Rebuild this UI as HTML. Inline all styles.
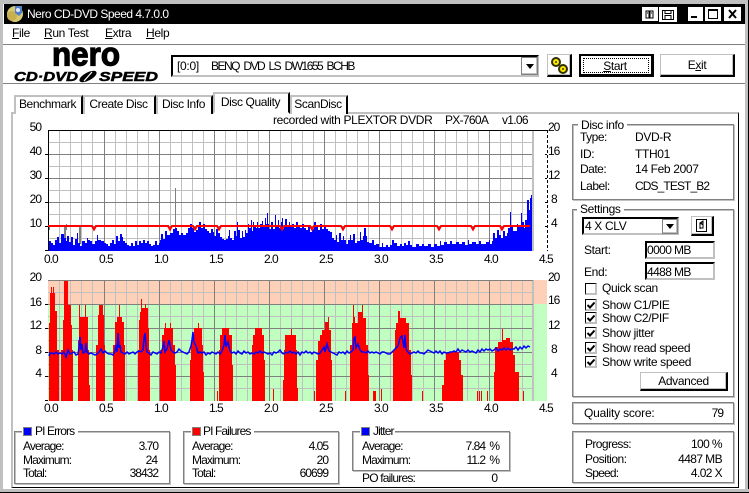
<!DOCTYPE html>
<html><head><meta charset="utf-8"><title>Nero CD-DVD Speed</title>
<style>
html,body{margin:0;padding:0}
body{width:749px;height:493px;position:relative;overflow:hidden;background:#fff;font:12px/14px "Liberation Sans",Arial,sans-serif;color:#000;letter-spacing:-.35px}
.t{position:absolute;white-space:pre;height:14px}
.r{position:absolute;white-space:pre;height:14px;text-align:right;letter-spacing:-1px}
.n{letter-spacing:-1px}
.l{letter-spacing:-.9px}
.b{position:absolute;box-sizing:border-box}
.gb{position:absolute;box-sizing:border-box;border:1px solid #808080;box-shadow:1px 1px 0 #c0c0c0,inset 1px 1px 0 #c0c0c0}
.leg{position:absolute;background:#fff;white-space:pre;height:14px;padding:0 3px}
.btn{position:absolute;box-sizing:border-box;background:#fff;border:1px solid #c0c0c0;border-right:2px solid #000;border-bottom:2px solid #000;box-shadow:inset -1px -1px 0 #c0c0c0;text-align:center}
.in{position:absolute;box-sizing:border-box;background:#fff;border:2px solid #c0c0c0;border-top:2px solid #000;border-left:2px solid #000;border-right-color:#c0c0c0}
.tab{position:absolute;box-sizing:border-box;background:#fff;border:2px solid #c0c0c0;border-bottom:0;border-right:2px solid #000;text-align:center;line-height:15px;letter-spacing:-.4px;padding-right:2px}
u{text-decoration:underline}
svg{position:absolute;left:0;top:0}
svg text{letter-spacing:0}
</style></head><body>

<!-- window frame -->
<div class="b" style="left:0;top:0;width:749px;height:4px;background:#c0c0c0"></div>
<div class="b" style="left:0;top:0;width:3px;height:493px;background:#c0c0c0"></div>
<div class="b" style="left:745px;top:0;width:3px;height:493px;background:#c0c0c0"></div>
<div class="b" style="left:748px;top:0;width:1px;height:493px;background:#000"></div>
<div class="b" style="left:0;top:489px;width:749px;height:3px;background:#c0c0c0"></div>
<div class="b" style="left:0;top:492px;width:749px;height:1px;background:#000"></div>

<!-- title bar -->
<div class="b" style="left:4px;top:4px;width:741px;height:20px;background:#000"></div>
<div class="t" style="left:27px;top:7px;color:#fff;letter-spacing:-.5px">Nero CD-DVD Speed 4.7.0.0</div>

<!-- menu -->
<div class="t" style="left:12px;top:26px"><u>F</u>ile</div>
<div class="t" style="left:44px;top:26px"><u>R</u>un Test</div>
<div class="t" style="left:105px;top:26px"><u>E</u>xtra</div>
<div class="t" style="left:146px;top:26px"><u>H</u>elp</div>
<div class="b" style="left:3px;top:44px;width:742px;height:1px;background:#808080"></div>
<div class="b" style="left:3px;top:83px;width:742px;height:1px;background:#808080"></div>

<!-- tabs -->
<div class="b" style="left:11px;top:112px;width:728px;height:376px;border:2px solid #c0c0c0;border-right:1px solid #000;border-bottom:1px solid #000"></div>
<div class="tab" style="left:14px;top:95px;width:69px;height:19px">Benchmark</div>
<div class="tab" style="left:83px;top:95px;width:73px;height:19px">Create Disc</div>
<div class="tab" style="left:156px;top:95px;width:57px;height:19px">Disc Info</div>
<div class="tab" style="left:213px;top:92px;width:77px;height:22px;line-height:16px;border-bottom:2px solid #fff">Disc Quality</div>
<div class="tab" style="left:290px;top:95px;width:58px;height:19px">ScanDisc</div>

<!-- graphics -->
<svg width="749" height="493" viewBox="0 0 749 493">
<defs>
<g id="vg">
<path shape-rendering="crispEdges" fill="none" stroke="#c0c0c0" d="M59.5 0V121M70.5 0V121M81.5 0V121M92.5 0V121M115.5 0V121M126.5 0V121M137.5 0V121M148.5 0V121M170.5 0V121M181.5 0V121M192.5 0V121M203.5 0V121M225.5 0V121M236.5 0V121M247.5 0V121M258.5 0V121M280.5 0V121M291.5 0V121M302.5 0V121M313.5 0V121M335.5 0V121M346.5 0V121M357.5 0V121M368.5 0V121M390.5 0V121M401.5 0V121M412.5 0V121M423.5 0V121M445.5 0V121M456.5 0V121M467.5 0V121M478.5 0V121M500.5 0V121M511.5 0V121M522.5 0V121M48 12.5H533M48 36.5H533M48 60.5H533M48 84.5H533M48 108.5H533"/>
<path shape-rendering="crispEdges" fill="none" stroke="#808080" d="M104.5 0V121M159.5 0V121M214.5 0V121M269.5 0V121M324.5 0V121M379.5 0V121M434.5 0V121M489.5 0V121M48 24.5H533M48 48.5H533M48 72.5H533M48 96.5H533"/>
<rect x="532" y="0" width="2" height="121" fill="#c0c0c0"/>
</g>
</defs>

<!-- top chart -->
<use href="#vg" x="0" y="130"/>
<path shape-rendering="crispEdges" fill="none" stroke="#000" d="M48.5 130V251M48 130.5H547"/>
<path shape-rendering="crispEdges" fill="none" stroke="#000" stroke-dasharray="3 2" d="M547.5 130V251"/>
<path shape-rendering="crispEdges" fill="none" stroke="#000" d="M547 154.5h-2M547 178.5h-2M547 202.5h-2M547 226.5h-2M45 154.5h3M45 178.5h3M45 202.5h3M45 226.5h3M45 250.5h3"/>
<path shape-rendering="crispEdges" fill="none" stroke="#808080" d="M175.5 188V251M64.5 226V248M65.5 226V248M79.5 226V248M80.5 226V244M49.5 226V230M66.5 224V230"/>
<path shape-rendering="crispEdges" fill="#0000ff" d="M49 251V241H51V243H53V245H55V240H57V237H59V243H61V234H64V238H66V241H67V236H69V242H71V237H73V245H75V239H77V233H78V243H80V246H82V241H85V243H87V238H88V240H90V241H92V244H95V241H97V235H98V240H101V241H104V243H106V244H108V246H110V243H112V240H114V244H116V236H118V241H120V234H122V237H123V241H125V243H127V245H129V246H131V243H133V246H135V241H137V245H139V241H141V243H143V240H145V243H147V241H149V244H151V246H153V245H155V241H157V245H159V243H160V240H161V234H163V239H165V231H167V235H170V233H173V229H175V228H177V231H179V235H181V233H183V235H186V233H188V228H190V224H192V228H194V232H196V230H198V226H199V222H201V228H203V224H205V229H207V231H209V233H211V229H213V232H214V236H216V229H218V233H220V237H222V239H224V240H226V239H228V236H229V230H230V238H232V240H234V231H236V236H237V222H238V230H240V238H242V231H243V237H245V230H246V233H248V224H249V228H251V220H252V231H253V222H254V226H256V228H257V222H258V228H260V224H262V221H263V226H265V218H266V224H267V213H268V224H269V229H271V222H273V229H275V215H276V226H278V220H279V228H281V222H282V218H283V229H284V226H285V219H287V227H289V222H290V226H292V224H294V228H296V222H298V226H300V228H302V224H304V228H306V230H308V226H310V232H312V229H314V222H316V226H318V230H320V224H322V229H324V226H326V229H328V231H330V232H332V238H334V240H336V235H337V242H339V233H341V240H343V236H344V240H346V244H348V240H350V235H351V240H353V234H355V243H357V241H360V232H361V240H363V236H364V228H366V236H367V242H369V243H372V240H374V245H376V244H379V247H382V243H383V247H386V245H388V247H390V245H392V240H394V243H397V246H400V244H402V246H404V243H406V245H408V241H410V245H412V247H416V244H419V246H422V244H424V246H428V244H431V247H434V244H437V246H440V241H441V245H444V242H447V244H450V241H452V244H456V242H459V244H462V242H465V245H468V240H469V244H472V242H476V244H479V241H481V244H486V242H489V240H490V244H492V241H493V233H495V238H497V230H499V235H501V238H503V231H505V236H507V233H508V228H510V212H511V226H513V231H517V224H518V226H521V213H522V222H524V228H525V220H527V200H529V210H530V198H531V195H532V251Z"/>
<path fill="none" stroke="#ff0000" stroke-width="2" d="M48 226H92L94 229.500 96 226H168L170 229.500 172 226H193L195 229.500 197 226H217L219 229.500 221 226H280L282 229.500 284 226H310L312 229.500 314 226H341L343 229.500 345 226H390L392 229.500 394 226H437L439 229.500 441 226H471L473 229.500 475 226H500L502 229.500 504 226H530"/>

<!-- bottom chart -->
<rect x="48" y="280" width="499" height="24" fill="#ffd0b8"/>
<rect x="48" y="304" width="499" height="97" fill="#c0ffc0"/>
<use href="#vg" x="0" y="280"/>
<path shape-rendering="crispEdges" fill="none" stroke="#808080" d="M48 280.5H533M48 304.5H533"/>
<path shape-rendering="crispEdges" fill="none" stroke="#000" d="M45 304.5h3M45 328.5h3M45 352.5h3M45 376.5h3M45 400.5h3"/>
<path shape-rendering="crispEdges" fill="#ff0000" d="M49 401V323H50V293H51V287H52V293H53V287H54V293H55V311H57V350H59V401H61V350H63V320H64V281H68V305H71V325H72V350H73V401H78V340H79V305H80V317H85V305H86V317H88V350H89V385H90V401H96V345H98V315H99V305H103V315H104V345H105V401H113V345H115V322H117V317H119V305H120V317H122V322H124V345H125V401H138V350H139V320H140V312H141V299H142V308H145V304H146V308H148V328H149V350H150V401H160V350H162V335H164V328H165V323H166V328H170V323H171V328H173V345H175V365H176V401H190V360H191V345H192V335H194V328H198V323H199V328H202V345H203V372H204V401H217V391H218V401H219V350H220V335H222V328H229V335H232V365H233V401H252V345H253V335H255V328H262V335H264V360H265V401H273V389H274V401H283V380H284V350H285V335H291V329H292V335H296V350H297V388H298V401H314V391H315V401H316V360H318V341H320V335H322V330H325V322H328V317H329V330H331V360H332V401H345V391H346V401H350V345H352V323H353V305H354V317H355V323H358V312H362V305H363V318H366V345H368V375H369V401H373V391H376V401H381V389H382V401H393V350H395V330H396V323H398V311H400V318H406V323H409V350H411V375H412V401H422V391H423V401H442V385H444V360H446V353H447V352H459V360H461V375H463V401H477V391H478V401H479V391H480V401H481V391H482V401H487V391H488V401H494V372H495V347H498V342H502V329H503V340H506V338H510V342H513V355H515V372H519V401H523V391H524V401Z"/>
<path fill="none" stroke="#0000ff" stroke-width="1.5" d="M49 356L50 353 52 353 54 354 56 352 58 354 60 353 62 354 64 352 66 357 68 350 70 354 72 353 74 352 76 355 78 354 79 348 80 337 81 350 82 344 83 353 85 352 86 343 87 352 89 354 91 353 93 354 95 355 97 354 99 352 101 349 103 353 105 351 107 353 109 354 111 354 113 355 115 351 116 345 117 352 118 333 119 348 120 345 121 352 123 353 125 354 127 352 129 354 131 353 133 352 135 354 137 352 139 351 141 352 143 350 144 338 145 333 146 346 147 352 149 353 151 355 153 352 155 353 157 354 159 352 161 353 163 347 164 341 165 352 167 349 169 340 171 350 173 352 175 353 177 352 179 349 181 351 183 352 185 353 187 354 189 352 191 346 192 340 193 332 194 342 196 346 198 353 200 352 202 353 204 352 206 355 208 353 210 354 212 352 214 353 216 354 218 352 220 354 222 351 224 345 225 335 226 347 228 342 230 351 232 353 234 352 236 354 238 351 240 353 242 354 244 351 246 353 248 352 250 354 252 353 254 354 256 352 258 353 260 351 262 353 264 352 266 353 268 354 270 353 272 355 274 352 276 353 278 352 280 350 282 353 284 354 286 352 288 353 290 351 292 353 294 352 296 354 298 352 300 355 302 352 304 353 306 351 308 353 310 352 312 354 314 352 316 353 318 354 320 353 322 350 324 347 325 352 327 344 329 351 331 352 333 353 335 354 337 355 339 352 341 353 343 352 345 354 347 351 349 353 351 352 353 350 354 338 355 337 356 348 358 344 360 350 362 352 364 352 366 353 368 351 370 353 372 352 374 353 376 352 378 353 380 354 382 352 384 352 386 353 388 354 390 354 392 352 394 350 396 348 398 346 400 338 402 336 404 348 405 335 406 349 408 352 410 354 412 353 414 352 416 353 418 351 420 353 422 353 424 354 426 352 428 350 430 351 432 352 434 353 436 351 438 353 440 351 442 354 444 352 446 353 448 353 450 352 452 352 454 351 456 352 458 349 460 352 462 350 464 351 466 352 468 350 470 352 472 351 474 352 476 353 478 350 480 352 482 349 484 351 486 349 488 350 490 349 492 351 494 350 496 348 498 351 500 349 502 350 504 348 506 350 508 348 510 350 512 349 514 349 516 347 518 350 520 347 522 349 524 346 526 348 528 346 530 347"/>

<!-- app icon -->
<circle cx="15" cy="14" r="8" fill="#d8c870"/>
<circle cx="12" cy="16" r="5" fill="#c8b050"/>
<path d="M15 6h7v7l-3 3-4-3z" fill="#5080c8"/>
<circle cx="18" cy="10" r="2" fill="#e0e8ff"/>

<!-- title buttons -->
<g shape-rendering="crispEdges">
<rect x="642" y="7" width="16" height="14" fill="#fff"/><path d="M646 11h3v7h-3zM650 11h3v7h-3zM647 13h1M651 13h1" fill="none" stroke="#000"/>
<rect x="659" y="7" width="18" height="15" fill="#fff"/><path d="M662.500 10.500h11v9h-11zM665 10.500v3h6v-3M665 19v-3.500h6V19" fill="none" stroke="#000"/>
<rect x="688" y="7" width="15" height="14" fill="#fff"/><rect x="691" y="16" width="6" height="2" fill="#000"/>
<rect x="705" y="7" width="16" height="14" fill="#fff"/><path d="M708.500 9.500h9v9h-9zM708 10.500h10" fill="none" stroke="#000"/>
<rect x="724" y="7" width="17" height="14" fill="#fff"/>
</g>
<path d="M729 10l7 8M736 10l-7 8" stroke="#000" stroke-width="2" fill="none"/>

<!-- logo -->
<text x="52" y="65.500" font-family="Liberation Sans" font-weight="bold" font-size="33" stroke="#000" stroke-width="1.200" textLength="68" lengthAdjust="spacingAndGlyphs">nero</text>
<text x="14" y="81" font-family="Liberation Sans" font-weight="bold" font-style="italic" font-size="12.500" stroke="#000" stroke-width=".5" textLength="64" lengthAdjust="spacingAndGlyphs">CD·DVD</text>
<ellipse cx="88" cy="76.500" rx="9.500" ry="4" fill="#000" transform="rotate(-28 88 76.500)"/>
<path d="M84 81L92 72" stroke="#fff" stroke-width="1.200" fill="none"/>
<text x="99" y="81" font-family="Liberation Sans" font-weight="bold" font-style="italic" font-size="12.500" stroke="#000" stroke-width=".5" textLength="59" lengthAdjust="spacingAndGlyphs">SPEED</text>

<!-- check marks -->
<g fill="none" stroke="#000" stroke-width="2">
<path d="M587.500 305l2.500 2.500 4.500-5"/><path d="M587.500 318l2.500 2.500 4.500-5"/><path d="M587.500 333l2.500 2.500 4.500-5"/><path d="M587.500 348l2.500 2.500 4.500-5"/><path d="M587.500 362l2.500 2.500 4.500-5"/>
</g>
</svg>

<!-- drive combo -->
<div class="in" style="left:171px;top:55px;width:368px;height:22px"></div>
<div class="t" style="left:177px;top:59px;letter-spacing:-.3px">[0:0]</div>
<div class="t" style="left:211px;top:59px;letter-spacing:-1.500px;word-spacing:2.500px">BENQ DVD LS DW1655 BCHB</div>
<div class="btn" style="left:521px;top:57px;width:17px;height:18px;border-right-width:1px;border-bottom-width:1px;border-color:#808080"></div>
<div class="b" style="left:526px;top:64px;width:0;height:0;border:4px solid transparent;border-top:5px solid #000;border-bottom:0"></div>

<!-- gear -->
<div class="btn" style="left:547px;top:54px;width:25px;height:23px"></div>
<svg width="749" height="493" viewBox="0 0 749 493">
<circle cx="556" cy="62" r="4" fill="#ffe800" stroke="#303000" stroke-width="2"/>
<circle cx="563" cy="69" r="4" fill="#ffe800" stroke="#303000" stroke-width="2"/>
<circle cx="556" cy="62" r="1" fill="#404000"/><circle cx="563" cy="69" r="1" fill="#404000"/>
</svg>

<!-- start / exit -->
<div class="b" style="left:579px;top:54px;width:75px;height:23px;border:2px solid #000;border-right-width:3px;border-bottom-width:3px;background:#fff"></div>
<div class="b" style="left:583px;top:58px;width:66px;height:15px;border:1px dotted #000"></div>
<div class="t" style="left:578px;top:59px;width:74px;text-align:center"><u>S</u>tart</div>
<div class="btn" style="left:660px;top:54px;width:75px;height:23px;line-height:20px"><span>E<u>x</u>it</span></div>

<!-- chart heading -->
<div class="t" style="left:273px;top:113px">recorded with PLEXTOR DVDR</div>
<div class="t" style="left:445px;top:113px;letter-spacing:-.7px">PX-760A</div>
<div class="t" style="left:502px;top:113px;letter-spacing:-.7px">v1.06</div>

<!-- axis labels top -->
<div class="r" style="left:21px;width:20px;top:120px">50</div>
<div class="r" style="left:21px;width:20px;top:144px">40</div>
<div class="r" style="left:21px;width:20px;top:168px">30</div>
<div class="r" style="left:21px;width:20px;top:192px">20</div>
<div class="r" style="left:21px;width:20px;top:216px">10</div>
<div class="t n" style="left:548px;top:120px">20</div>
<div class="t n" style="left:548px;top:144px">16</div>
<div class="t n" style="left:548px;top:168px">12</div>
<div class="t n" style="left:551px;top:192px">8</div>
<div class="t n" style="left:551px;top:216px">4</div>
<div class="t n" style="left:44px;top:252px">0.0</div><div class="t n" style="left:99px;top:252px">0.5</div><div class="t n" style="left:154px;top:252px">1.0</div><div class="t n" style="left:209px;top:252px">1.5</div><div class="t n" style="left:264px;top:252px">2.0</div><div class="t n" style="left:319px;top:252px">2.5</div><div class="t n" style="left:374px;top:252px">3.0</div><div class="t n" style="left:429px;top:252px">3.5</div><div class="t n" style="left:484px;top:252px">4.0</div><div class="t n" style="left:539px;top:252px">4.5</div>

<!-- axis labels bottom -->
<div class="r" style="left:21px;width:20px;top:270px">20</div>
<div class="r" style="left:21px;width:20px;top:295px">16</div>
<div class="r" style="left:21px;width:20px;top:318px">12</div>
<div class="r" style="left:21px;width:20px;top:343px">8</div>
<div class="r" style="left:21px;width:20px;top:366px">4</div>
<div class="t n" style="left:548px;top:270px">20</div>
<div class="t n" style="left:548px;top:293px">16</div>
<div class="t n" style="left:548px;top:318px">12</div>
<div class="t n" style="left:551px;top:342px">8</div>
<div class="t n" style="left:551px;top:366px">4</div>
<div class="t n" style="left:44px;top:401px">0.0</div><div class="t n" style="left:99px;top:401px">0.5</div><div class="t n" style="left:154px;top:401px">1.0</div><div class="t n" style="left:209px;top:401px">1.5</div><div class="t n" style="left:264px;top:401px">2.0</div><div class="t n" style="left:319px;top:401px">2.5</div><div class="t n" style="left:374px;top:401px">3.0</div><div class="t n" style="left:429px;top:401px">3.5</div><div class="t n" style="left:484px;top:401px">4.0</div><div class="t n" style="left:539px;top:401px">4.5</div>

<!-- stats -->
<div class="gb" style="left:14px;top:431px;width:156px;height:53px"></div>
<div class="leg l" style="left:22px;top:424px;padding-left:13px;padding-right:4px">PI Errors</div>
<div class="b" style="left:24px;top:428px;width:7px;height:7px;background:#0000ff;outline:1px solid #808080"></div>
<div class="t l" style="left:23px;top:439px">Average:</div><div class="r" style="left:100px;width:58px;top:439px">3.70</div>
<div class="t l" style="left:23px;top:453px">Maximum:</div><div class="r" style="left:100px;width:57px;top:453px">24</div>
<div class="t l" style="left:23px;top:466px">Total:</div><div class="r" style="left:100px;width:58px;top:466px">38432</div>

<div class="gb" style="left:183px;top:431px;width:156px;height:53px"></div>
<div class="leg l" style="left:191px;top:424px;padding-left:12px;padding-right:4px">PI Failures</div>
<div class="b" style="left:193px;top:428px;width:7px;height:7px;background:#ff0000;outline:1px solid #808080"></div>
<div class="t l" style="left:192px;top:439px">Average:</div><div class="r" style="left:270px;width:58px;top:439px">4.05</div>
<div class="t l" style="left:192px;top:453px">Maximum:</div><div class="r" style="left:270px;width:58px;top:453px">20</div>
<div class="t l" style="left:192px;top:466px">Total:</div><div class="r" style="left:270px;width:58px;top:466px">60699</div>

<div class="gb" style="left:352px;top:431px;width:158px;height:40px"></div>
<div class="leg l" style="left:360px;top:424px;padding-left:13px;padding-right:1px">Jitter</div>
<div class="b" style="left:362px;top:428px;width:7px;height:7px;background:#0000ff;outline:1px solid #808080"></div>
<div class="t l" style="left:362px;top:439px">Average:</div><div class="r" style="left:440px;width:59px;top:439px;word-spacing:2px">7.84 %</div>
<div class="t l" style="left:362px;top:453px">Maximum:</div><div class="r" style="left:440px;width:59px;top:453px;word-spacing:2px">11.2 %</div>
<div class="t" style="left:362px;top:471px;letter-spacing:-.8px">PO failures:</div><div class="r" style="left:440px;width:57px;top:471px">0</div>

<!-- disc info -->
<div class="gb" style="left:572px;top:124px;width:162px;height:76px"></div>
<div class="leg" style="left:578px;top:118px">Disc info</div>
<div class="t" style="left:580px;top:130px;letter-spacing:-.5px">Type:</div><div class="t" style="left:635px;top:130px">DVD-R</div>
<div class="t" style="left:580px;top:147px">ID:</div><div class="t" style="left:635px;top:147px">TTH01</div>
<div class="t" style="left:580px;top:162px;letter-spacing:-.5px">Date:</div><div class="t" style="left:635px;top:162px">14 Feb 2007</div>
<div class="t" style="left:580px;top:179px;letter-spacing:-.5px">Label:</div><div class="t l" style="left:635px;top:179px">CDS_TEST_B2</div>

<!-- settings -->
<div class="gb" style="left:572px;top:209px;width:162px;height:188px"></div>
<div class="leg" style="left:577px;top:202px">Settings</div>
<div class="in" style="left:582px;top:217px;width:97px;height:18px"></div>
<div class="t" style="left:585px;top:219px">4 X CLV</div>
<div class="btn" style="left:662px;top:219px;width:16px;height:15px;border-width:1px;border-color:#808080"></div>
<div class="b" style="left:666px;top:224px;width:0;height:0;border:4px solid transparent;border-top:5px solid #000;border-bottom:0"></div>
<div class="btn" style="left:691px;top:216px;width:23px;height:20px"></div>
<div class="b" style="left:696px;top:219px;width:11px;height:13px;border:1px solid #000"></div>
<svg width="749" height="493" viewBox="0 0 749 493"><path d="M700 229v-6h3M703 221l0 4 -3-2zM703 222v6h-3" fill="none" stroke="#000"/></svg>
<div class="t" style="left:584px;top:243px">Start:</div>
<div class="in" style="left:645px;top:241px;width:70px;height:18px"></div>
<div class="t" style="left:647px;top:243px;letter-spacing:-.6px">0000 MB</div>
<div class="t" style="left:584px;top:265px">End:</div>
<div class="in" style="left:645px;top:262px;width:70px;height:18px"></div>
<div class="t" style="left:647px;top:265px;letter-spacing:-.6px">4488 MB</div>

<div class="in" style="left:585px;top:283px;width:12px;height:12px;border-width:1px;border-right-width:2px;border-bottom-width:2px"></div>
<div class="t" style="left:602px;top:281px">Quick scan</div>
<div class="in" style="left:585px;top:299px;width:12px;height:12px;border-width:1px;border-right-width:2px;border-bottom-width:2px;background:transparent"></div>
<div class="t" style="left:602px;top:298px">Show C1/PIE</div>
<div class="in" style="left:585px;top:312px;width:12px;height:12px;border-width:1px;border-right-width:2px;border-bottom-width:2px;background:transparent"></div>
<div class="t" style="left:602px;top:311px">Show C2/PIF</div>
<div class="in" style="left:585px;top:327px;width:12px;height:12px;border-width:1px;border-right-width:2px;border-bottom-width:2px;background:transparent"></div>
<div class="t" style="left:602px;top:326px">Show jitter</div>
<div class="in" style="left:585px;top:342px;width:12px;height:12px;border-width:1px;border-right-width:2px;border-bottom-width:2px;background:transparent"></div>
<div class="t" style="left:602px;top:341px">Show read speed</div>
<div class="in" style="left:585px;top:356px;width:12px;height:12px;border-width:1px;border-right-width:2px;border-bottom-width:2px;background:transparent"></div>
<div class="t" style="left:602px;top:355px">Show write speed</div>
<div class="btn" style="left:640px;top:372px;width:88px;height:19px;line-height:16px">Advanced</div>

<!-- quality -->
<div class="gb" style="left:572px;top:402px;width:162px;height:22px"></div>
<div class="t" style="left:584px;top:406px;letter-spacing:-.2px">Quality score:</div><div class="r" style="left:660px;width:63px;top:406px">79</div>

<!-- progress -->
<div class="gb" style="left:572px;top:431px;width:162px;height:52px"></div>
<div class="t" style="left:585px;top:437px;letter-spacing:-.6px">Progress:</div><div class="r" style="left:650px;width:72px;top:437px;letter-spacing:-.6px">100 %</div>
<div class="t" style="left:585px;top:452px;letter-spacing:-.5px">Position:</div><div class="r" style="left:650px;width:72px;top:452px;letter-spacing:-.6px">4487 MB</div>
<div class="t" style="left:585px;top:466px;letter-spacing:-.8px">Speed:</div><div class="r" style="left:650px;width:72px;top:466px;letter-spacing:-.6px">4.02 X</div>

</body></html>
